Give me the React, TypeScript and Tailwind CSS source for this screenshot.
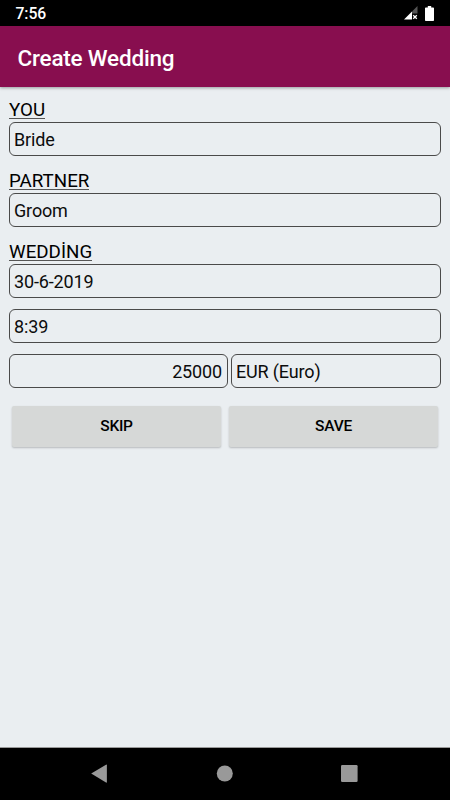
// src/screens/CreateWedding.tsx
import { ReactNode } from "react"

function StatusBar() {
  return (
    <div className="flex h-[26px] items-center justify-between bg-black pl-[15.5px] pr-[16px]">
      <span className="pt-[2px] text-[15.75px] font-medium leading-none tracking-[-0.1px] text-white">7:56</span>
      <div className="flex items-center gap-[7px]">
        <svg width="14" height="14" viewBox="0 0 14 14">
          <path d="M8 5.5L13.5 0V7.5H8z" fill="#555" />
          <path d="M8 5.5V13.5H0z" fill="#fff" />
          <path d="M9.2 9.2l3.6 3.6M12.8 9.2l-3.6 3.6" stroke="#fff" strokeWidth="1.3" />
        </svg>
        <svg width="9" height="15" viewBox="0 0 9 15">
          <path d="M2.8 0h3.4v1.4H8.2a.8.8 0 0 1 .8.8v12a.8.8 0 0 1-.8.8H.8a.8.8 0 0 1-.8-.8v-12a.8.8 0 0 1 .8-.8h2z" fill="#fff" />
        </svg>
      </div>
    </div>
  )
}

function Label({ children }: { children: ReactNode }) {
  return (
    <div className="flex h-[22px] items-start">
      <span className="h-[19px] border-b border-[#555] text-[18.75px] leading-[20px] text-black">{children}</span>
    </div>
  )
}

function Field({ value, className = "" }: { value: string; className?: string }) {
  return (
    <div className={`flex h-[34px] items-center rounded-[6px] border border-[#4a4a4a] pl-[4px] pr-[5px] pt-px text-[18px] tracking-[-0.15px] ${className}`}>
      {value}
    </div>
  )
}

function Button({ children }: { children: ReactNode }) {
  return (
    <button className="h-[41px] flex-1 rounded-[2px] bg-[#d6d8d7] text-[15.5px] font-medium tracking-[-0.25px] text-black shadow-[0_1px_2px_rgba(0,0,0,0.22)]">
      {children}
    </button>
  )
}

export default function App() {
  return (
    <div className="flex h-[800px] w-[450px] flex-col overflow-hidden bg-[#eaeef1] font-['Roboto',sans-serif] text-[#0c0c0c]">
      <StatusBar />
      <header className="flex h-[61px] items-center bg-[#880e4f] pl-[17.5px] pt-[4px] text-[22.5px] font-medium tracking-[-0.2px] text-white shadow-[0_1px_3px_rgba(0,0,0,0.35)]">
        Create Wedding
      </header>

      <main className="flex-1 px-[9px] pt-[13px]">
        <Label>YOU</Label>
        <Field value="Bride" />
        <div className="h-[15px]" />
        <Label>PARTNER</Label>
        <Field value="Groom" />
        <div className="h-[15px]" />
        <Label>WEDDİNG</Label>
        <Field value="30-6-2019" />
        <Field value="8:39" className="mt-[11px]" />
        <div className="mt-[11px] flex gap-[3px]">
          <Field value="25000" className="w-[219px] justify-end" />
          <Field value="EUR (Euro)" className="flex-1" />
        </div>
        <div className="mt-[18px] flex gap-[8px] px-[3px]">
          <Button>SKIP</Button>
          <Button>SAVE</Button>
        </div>
      </main>

      <nav className="h-[53px] border-t border-[#999] bg-black">
        <svg width="450" height="52" viewBox="0 0 450 52" fill="#999">
          <path d="M91.2 25.5L106 16.7a.6.6 0 0 1 .9.5v16.8a.6.6 0 0 1-.9.5z" />
          <circle cx="224.8" cy="25.5" r="8" />
          <rect x="341" y="17" width="16.6" height="17" rx="1.2" />
        </svg>
      </nav>
    </div>
  )
}
